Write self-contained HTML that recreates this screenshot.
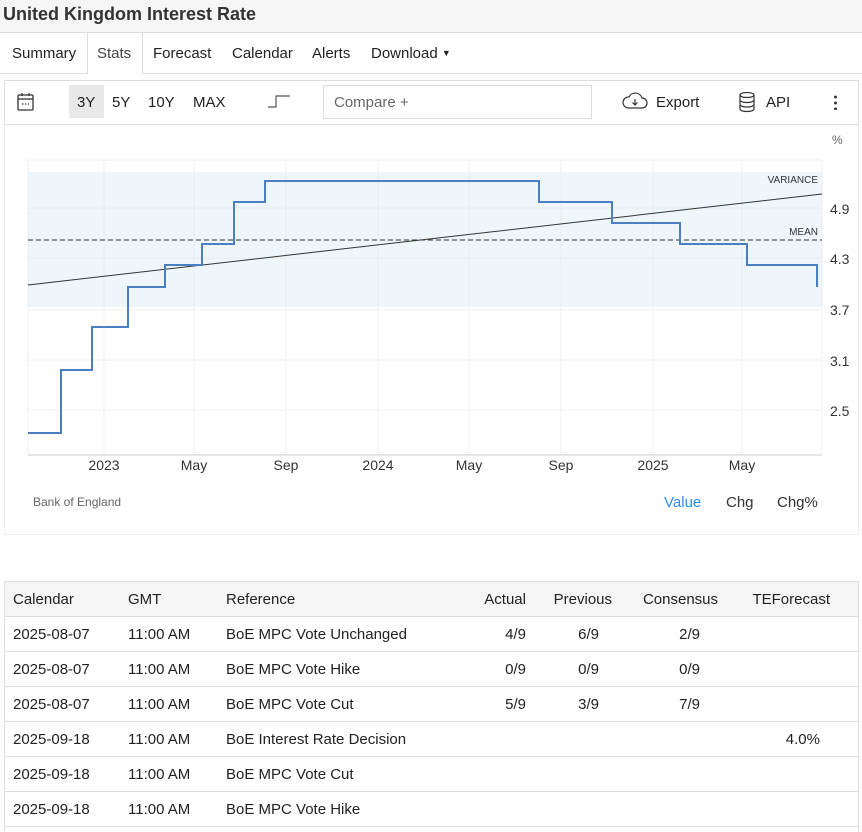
<!DOCTYPE html><html><head><style>
body{margin:0;width:862px;height:831px;overflow:hidden;background:#fff;font-family:"Liberation Sans",Arial,sans-serif;color:#222;position:relative}
.a{position:absolute;white-space:nowrap}
td{padding:0;height:34px;border-bottom:1px solid #ddd;font-size:15px}
</style></head><body>
<div class="a" style="left:0;top:0;width:862px;height:32px;background:#f5f5f5;border-bottom:1px solid #ddd"></div>
<div class="a" style="left:3px;top:4px;font-size:18px;font-weight:bold;color:#333">United Kingdom Interest Rate</div>
<div class="a" style="left:0;top:73px;width:862px;border-top:1px solid #ddd"></div>
<div class="a" style="left:87px;top:33px;width:54px;height:41px;background:#fff;border-left:1px solid #ddd;border-right:1px solid #ddd"></div>
<div class="a" style="top:45px;left:12px;font-size:15px">Summary</div>
<div class="a" style="top:45px;left:97px;font-size:15px;color:#444">Stats</div>
<div class="a" style="top:45px;left:153px;font-size:15px">Forecast</div>
<div class="a" style="top:45px;left:232px;font-size:15px">Calendar</div>
<div class="a" style="top:45px;left:312px;font-size:15px">Alerts</div>
<div class="a" style="top:45px;left:371px;font-size:15px">Download <span style="font-size:9px;vertical-align:2px">▼</span></div>
<div class="a" style="left:4px;top:80px;width:853px;height:43px;border:1px solid #ddd"></div>
<svg class="a" style="left:16px;top:91px" width="20" height="22" viewBox="0 0 20 22" fill="none" stroke="#333" stroke-width="1.3"><rect x="2" y="4" width="15" height="15" rx="1"/><line x1="2" y1="8" x2="17" y2="8"/><line x1="6" y1="2" x2="6" y2="5"/><line x1="13" y1="2" x2="13" y2="5"/><line x1="6" y1="13" x2="13" y2="13" stroke-dasharray="1.5 1.5"/></svg>
<div class="a" style="left:69px;top:85px;width:35px;height:33px;background:#e8e8e8"></div>
<div class="a" style="left:77px;top:94px;font-size:15px">3Y</div>
<div class="a" style="left:112px;top:94px;font-size:15px">5Y</div>
<div class="a" style="left:148px;top:94px;font-size:15px">10Y</div>
<div class="a" style="left:193px;top:94px;font-size:15px">MAX</div>
<svg class="a" style="left:266px;top:93px" width="26" height="16" fill="none" stroke="#555" stroke-width="1.2"><path d="M2 14H10V3H24"/></svg>
<div class="a" style="left:323px;top:85px;width:267px;height:32px;border:1px solid #ddd"></div>
<div class="a" style="left:334px;top:94px;font-size:15px;color:#666">Compare +</div>
<svg class="a" style="left:622px;top:91px" width="26" height="20" fill="none" stroke="#333" stroke-width="1.2"><path d="M6 17H20a5 5 0 0 0 0-10a7 7 0 0 0-13-1a5 5 0 0 0-1 11z"/><path d="M13 8v6M10.5 11.5L13 14l2.5-2.5"/></svg>
<div class="a" style="left:656px;top:94px;font-size:15px">Export</div>
<svg class="a" style="left:738px;top:91px" width="18" height="22" fill="none" stroke="#333" stroke-width="1.2"><ellipse cx="9" cy="4" rx="7" ry="2.5"/><path d="M2 4v14c0 1.4 3 2.5 7 2.5s7-1.1 7-2.5V4M2 9c0 1.4 3 2.5 7 2.5S16 10.4 16 9M2 13.5c0 1.4 3 2.5 7 2.5s7-1.1 7-2.5"/></svg>
<div class="a" style="left:766px;top:94px;font-size:15px">API</div>
<div class="a" style="left:834px;top:94px;width:3px;height:16px;background:radial-gradient(circle,#333 1.3px,transparent 1.6px) 0 0/3px 6px"></div>
<div class="a" style="left:4px;top:124px;width:853px;height:410px;border:1px solid #eee;border-top:none"></div>
<svg class="a" style="left:0;top:0" width="862" height="540">
<rect x="28" y="172" width="794" height="135" fill="#eef6fb"/>
<g stroke="#e2e2e2" stroke-dasharray="1 1"><line x1="28" y1="160" x2="822" y2="160"/><line x1="28" y1="208" x2="822" y2="208"/><line x1="28" y1="258" x2="822" y2="258"/><line x1="28" y1="310" x2="822" y2="310"/><line x1="28" y1="360" x2="822" y2="360"/><line x1="28" y1="410" x2="822" y2="410"/>
<line x1="104" y1="160" x2="104" y2="455"/><line x1="194" y1="160" x2="194" y2="455"/><line x1="286" y1="160" x2="286" y2="455"/><line x1="378" y1="160" x2="378" y2="455"/><line x1="469" y1="160" x2="469" y2="455"/><line x1="561" y1="160" x2="561" y2="455"/><line x1="653" y1="160" x2="653" y2="455"/><line x1="742" y1="160" x2="742" y2="455"/><line x1="28" y1="160" x2="28" y2="455"/><line x1="822" y1="160" x2="822" y2="455"/></g>
<line x1="28" y1="455" x2="822" y2="455" stroke="#ccc"/>
<line x1="28" y1="240" x2="822" y2="240" stroke="#333" stroke-dasharray="5 3"/>
<line x1="28" y1="285" x2="822" y2="194" stroke="#333"/>
<path d="M28 433H61V370H92V327H128V287H165V265H202V244H234V202H265V181H539V202H612V223H680V244H747V265H817V287" fill="none" stroke="#4a7fc1" stroke-width="2"/>
<g font-size="10" fill="#333" text-anchor="end"><text x="818" y="183">VARIANCE</text><text x="818" y="235">MEAN</text></g>
<g font-size="14" fill="#333"><text x="830" y="214">4.9</text><text x="830" y="264">4.3</text><text x="830" y="315">3.7</text><text x="830" y="366">3.1</text><text x="830" y="416">2.5</text><text x="832" y="144" font-size="12" fill="#666">%</text></g>
<g font-size="14" fill="#333" text-anchor="middle"><text x="104" y="470">2023</text><text x="194" y="470">May</text><text x="286" y="470">Sep</text><text x="378" y="470">2024</text><text x="469" y="470">May</text><text x="561" y="470">Sep</text><text x="653" y="470">2025</text><text x="742" y="470">May</text></g>
<text x="33" y="506" font-size="12" fill="#666">Bank of England</text>
<g font-size="15"><text x="664" y="507" fill="#2a8cf0">Value</text><text x="726" y="507" fill="#333">Chg</text><text x="777" y="507" fill="#333">Chg%</text></g>
</svg>
<div class="a" style="left:4px;top:581px;width:853px;height:250px;border:1px solid #ddd;border-bottom:none"></div>
<table class="a" style="left:5px;top:582px;width:853px;border-collapse:collapse;table-layout:fixed">
<colgroup><col style="width:123px"><col style="width:98px"><col style="width:244px"><col style="width:56px"><col style="width:86px"><col style="width:106px"><col></colgroup>
<tr style="background:#f5f5f5"><td style="padding-left:8px">Calendar</td><td>GMT</td><td>Reference</td><td style="text-align:right">Actual</td><td style="text-align:right">Previous</td><td style="text-align:right">Consensus</td><td style="text-align:right;padding-right:28px">TEForecast</td></tr>
<tr><td style="padding-left:8px">2025-08-07</td><td>11:00 AM</td><td>BoE MPC Vote Unchanged</td><td style="text-align:right">4/9</td><td style="text-align:right;padding-right:13px">6/9</td><td style="text-align:right;padding-right:18px">2/9</td><td></td></tr>
<tr><td style="padding-left:8px">2025-08-07</td><td>11:00 AM</td><td>BoE MPC Vote Hike</td><td style="text-align:right">0/9</td><td style="text-align:right;padding-right:13px">0/9</td><td style="text-align:right;padding-right:18px">0/9</td><td></td></tr>
<tr><td style="padding-left:8px">2025-08-07</td><td>11:00 AM</td><td>BoE MPC Vote Cut</td><td style="text-align:right">5/9</td><td style="text-align:right;padding-right:13px">3/9</td><td style="text-align:right;padding-right:18px">7/9</td><td></td></tr>
<tr><td style="padding-left:8px">2025-09-18</td><td>11:00 AM</td><td>BoE Interest Rate Decision</td><td></td><td></td><td></td><td style="text-align:right;padding-right:38px">4.0%</td></tr>
<tr><td style="padding-left:8px">2025-09-18</td><td>11:00 AM</td><td>BoE MPC Vote Cut</td><td></td><td></td><td></td><td></td></tr>
<tr><td style="padding-left:8px">2025-09-18</td><td>11:00 AM</td><td>BoE MPC Vote Hike</td><td></td><td></td><td></td><td></td></tr>
</table>
</body></html>
